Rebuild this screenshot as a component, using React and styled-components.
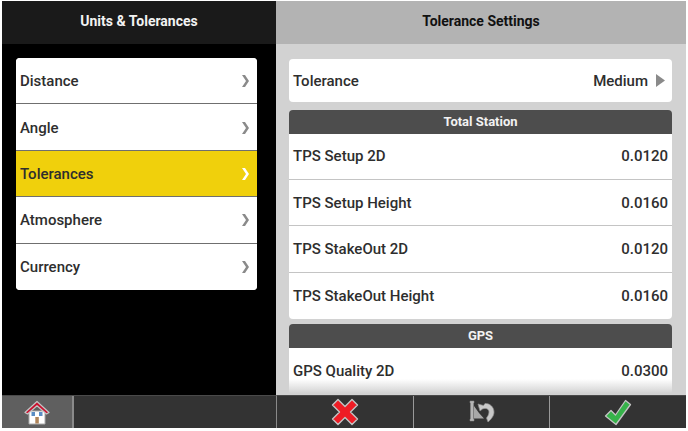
import React from "react";
import styled, { createGlobalStyle } from "styled-components";

const Global = createGlobalStyle`
  html, body { margin: 0; padding: 0; background: #fff; }
  body { width: 688px; height: 431px; overflow: hidden; font-family: Roboto, "Liberation Sans", sans-serif; }
`;
const Screen = styled.div`
  width: 684px; height: 427px; margin: 1px 0 0 2px;
  display: grid; grid-template-columns: 274px 410px; grid-template-rows: 43px 351px 33px;
`;
const Header = styled.div`
  display: flex; align-items: center; justify-content: center;
  font-size: 14px; font-weight: 700; padding-bottom: 3px; box-sizing: border-box;
  background: ${p => (p.$light ? "#b3b3b3" : "#1a1a1a")};
  color: ${p => (p.$light ? "#111" : "#f2f2f2")};
`;
const LeftBody = styled.div`
  background: #000; padding: 14px 19px 0 14px;
`;
const Menu = styled.div`
  background: #fff; border-radius: 4px; overflow: hidden; display: flex; flex-direction: column;
`;
const MenuRow = styled.div`
  height: 46.4px; box-sizing: border-box; padding: 1px 7px 0 4px;
  display: flex; align-items: center; justify-content: space-between;
  font-size: 15px; font-weight: 500; color: #2e2e2e;
  background: ${p => (p.$active ? "#f0d00c" : "#fff")};
  border-bottom: ${p => (p.$last ? "0" : "1.5px solid #6f6f6f")};
`;
const RightBody = styled.div`
  position: relative; background: #d2d2d2; padding: 15px 14px 0 13px; overflow: hidden;
`;
const Card = styled.div`
  height: 43px; background: #fff; border-radius: 4px; box-sizing: border-box; padding: 0 7px 0 4px;
  display: flex; align-items: center; justify-content: space-between;
  font-size: 15px; font-weight: 500; color: #2e2e2e; margin-bottom: 8px;
`;
const Selector = styled.div`
  display: flex; align-items: center; gap: 8px;
`;
const Section = styled.div`
  border-radius: 4px; overflow: hidden; margin-bottom: 5px;
`;
const SectionHead = styled.div`
  height: 23.5px; background: #4d4d4d; color: #f2f2f2; font-size: 13px; font-weight: 700;
  display: flex; align-items: center; justify-content: center;
`;
const Row = styled.div`
  height: 46.4px; box-sizing: border-box; background: #fff; padding: 0 4px;
  display: flex; align-items: center; justify-content: space-between;
  font-size: 15px; font-weight: 500; color: #2e2e2e;
  border-bottom: ${p => (p.$last ? "0" : "1.5px solid #c4c4c4")};
`;
const Fade = styled.div`
  position: absolute; left: 0; right: 0; bottom: 0; height: 16px;
  background: linear-gradient(rgba(210,210,210,0), #d2d2d2 90%);
`;
const FooterLeft = styled.div`
  background: #333; display: flex; border-top: 1px solid #4a4a4a; box-sizing: border-box;
`;
const HomeButton = styled.div`
  width: 72px; background: #5f5f5f; border-right: 2px solid #8a8a8a; box-sizing: border-box;
  display: flex; align-items: center; justify-content: center;
`;
const FooterRight = styled.div`
  background: #333; display: grid; grid-template-columns: 137px 136px 135px;
  border-top: 1px solid #4a4a4a; border-left: 1px solid #8a8a8a; box-sizing: border-box;
`;
const FootButton = styled.div`
  display: flex; align-items: center; justify-content: center;
  border-right: ${p => (p.$last ? "0" : "1px solid #999")};
`;

const Chevron = ({ color = "#8a8a8a" }) => (
  <svg width="9" height="14" viewBox="0 0 9 14">
    <path d="M1 1 L4 1 L8 7 L4 13 L1 13 L5 7 Z" fill={color} />
  </svg>
);
const Tri = () => (
  <svg width="9" height="13" viewBox="0 0 9 13"><path d="M0 0 L9 6.5 L0 13 Z" fill="#8a8a8a" /></svg>
);
const Home = () => (
  <svg width="26" height="25" viewBox="0 0 26 25">
    <path d="M5 11 H21 V24 H5 Z" fill="#fff" stroke="#aaa" strokeWidth="1" />
    <path d="M1 12.5 L13 1.5 L25 12.5 L22.5 14 L13 5.8 L3.5 14 Z" fill="#c8102e" stroke="#c4c4c4" strokeWidth="1.2" strokeLinejoin="round" />
    <rect x="7.5" y="12" width="3.5" height="4" fill="#5b8ec4" />
    <rect x="15" y="12" width="3.5" height="4" fill="#5b8ec4" />
    <rect x="11.3" y="17" width="3.5" height="6.5" fill="#b0855a" />
  </svg>
);
const Cross = () => (
  <svg width="28" height="28" viewBox="0 0 28 28">
    <path d="M7 1.5 L14 8.5 L21 1.5 L26.5 7 L19.5 14 L26.5 21 L21 26.5 L14 19.5 L7 26.5 L1.5 21 L8.5 14 L1.5 7 Z"
      fill="#ee1c25" stroke="#c4c4c4" strokeWidth="1.4" strokeLinejoin="round" />
  </svg>
);
const Undo = () => (
  <svg width="26" height="24" viewBox="0 0 26 24">
    <path d="M1 1 H5 V3 H4.5 V19 H5 V21 H1 V19 H1.5 V3 H1 Z" fill="#b5b5b5" stroke="#8a8a8a" strokeWidth="0.5" />
    <path d="M5 6 L10 13 L15 18.5 H5 Z" fill="#a8a8a8" />
    <path d="M9 4 L11 11 L13.5 9 C17 7.5 20 9 20 12 C20 15 18 17 17.5 18 L19 22 C22 19.5 25 16 25 12 C25 6.5 20 3 16 3.5 L14.5 5.5 Z" fill="#c8c8c8" stroke="#8f8f8f" strokeWidth="0.7" strokeLinejoin="round" />
  </svg>
);
const Check = () => (
  <svg width="28" height="27" viewBox="0 0 28 27">
    <path d="M1.5 17 L7 11.5 L11.5 16 L21.5 1.5 L26.5 5.5 L12 25.5 Z" fill="#36b34a" stroke="#c4c4c4" strokeWidth="1.3" strokeLinejoin="round" />
  </svg>
);

const menu = ["Distance", "Angle", "Tolerances", "Atmosphere", "Currency"];
const tps = [
  ["TPS Setup 2D", "0.0120"],
  ["TPS Setup Height", "0.0160"],
  ["TPS StakeOut 2D", "0.0120"],
  ["TPS StakeOut Height", "0.0160"],
];

export default function App() {
  return (
    <>
      <Global />
      <Screen>
        <Header>Units &amp; Tolerances</Header>
        <Header $light>Tolerance Settings</Header>
        <LeftBody>
          <Menu>
            {menu.map((m, i) => (
              <MenuRow key={m} $active={m === "Tolerances"} $last={i === menu.length - 1}>
                {m}
                <Chevron color={m === "Tolerances" ? "#fff" : "#8a8a8a"} />
              </MenuRow>
            ))}
          </Menu>
        </LeftBody>
        <RightBody>
          <Card>
            Tolerance
            <Selector>Medium <Tri /></Selector>
          </Card>
          <Section>
            <SectionHead>Total Station</SectionHead>
            {tps.map(([k, v], i) => (
              <Row key={k} $last={i === tps.length - 1}><span>{k}</span><span>{v}</span></Row>
            ))}
          </Section>
          <Section>
            <SectionHead>GPS</SectionHead>
            <Row $last><span>GPS Quality 2D</span><span>0.0300</span></Row>
          </Section>
          <Fade />
        </RightBody>
        <FooterLeft>
          <HomeButton><Home /></HomeButton>
        </FooterLeft>
        <FooterRight>
          <FootButton><Cross /></FootButton>
          <FootButton><Undo /></FootButton>
          <FootButton $last><Check /></FootButton>
        </FooterRight>
      </Screen>
    </>
  );
}
